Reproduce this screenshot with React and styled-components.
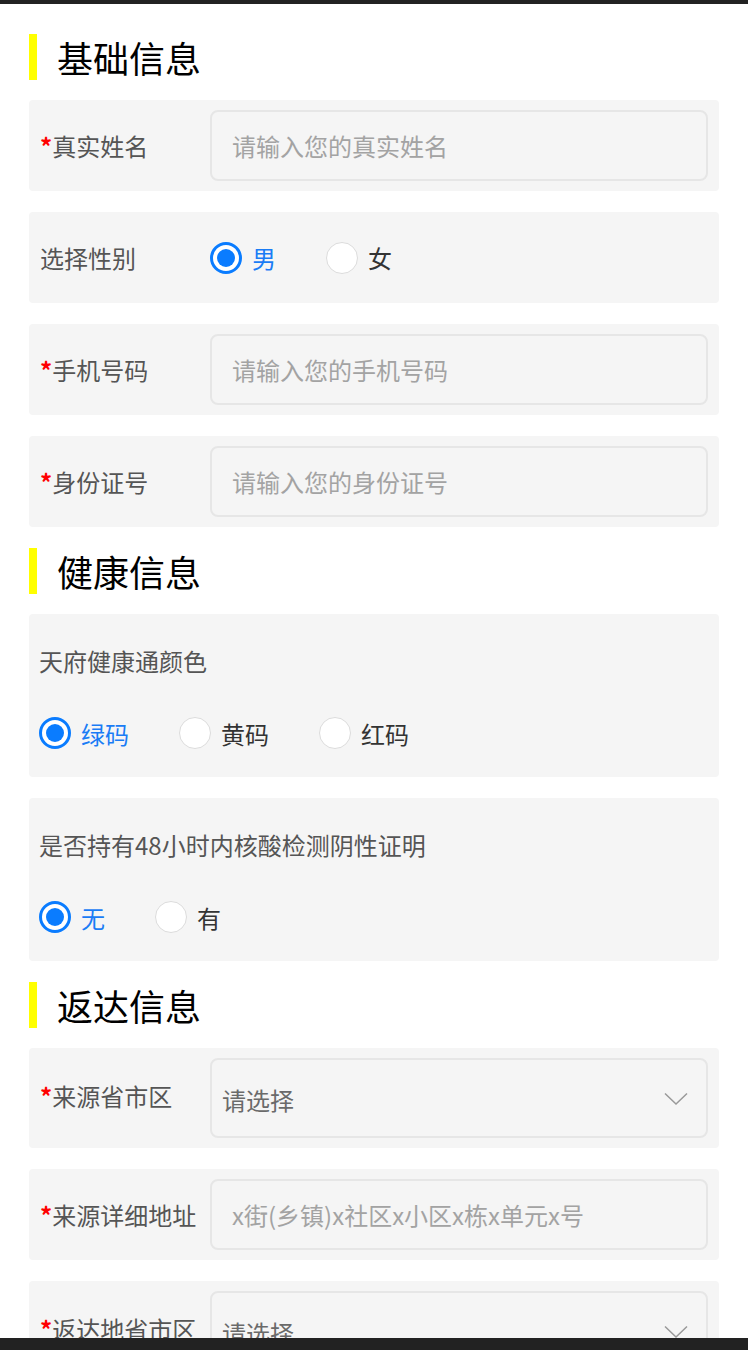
import React, { useState } from 'react'
import styled, { createGlobalStyle } from 'styled-components'

const GlobalStyle = createGlobalStyle`
  * { box-sizing: border-box; }
  body {
    margin: 0;
    background: #fff;
    font-family: "Noto Sans CJK SC", "Noto Sans", sans-serif;
  }
`
const TopBar = styled.div`
  height: 4px;
  background: #222;
`
const BottomBar = styled.div`
  position: fixed;
  left: 0;
  right: 0;
  bottom: 0;
  height: 12px;
  background: #222;
`
const Page = styled.div`
  padding: 30px 29px 40px;
  display: flex;
  flex-direction: column;
`
const SectionTitle = styled.h2`
  margin: 0 0 20px;
  height: 46px;
  display: flex;
  align-items: center;
  border-left: 8px solid #ffff00;
  padding-left: 20px;
  font-size: 36px;
  font-weight: 400;
  color: #000;
`
const Row = styled.div`
  display: flex;
  align-items: center;
  background: #f5f5f5;
  border-radius: 4px;
  padding: 10px 11px;
  min-height: ${p => p.$tall ? 100 : 91}px;
  margin-bottom: 21px;
`
const Block = styled.div`
  background: #f5f5f5;
  border-radius: 4px;
  padding: 10px 10px 8px 10px;
  margin-bottom: 21px;
`
const Question = styled.div`
  height: 72px;
  display: flex;
  align-items: center;
  font-size: 24px;
  color: #555;
`
const Label = styled.div`
  width: 170px;
  flex-shrink: 0;
  font-size: 24px;
  color: #555;
  white-space: nowrap;
  margin-top: ${p => p.$up ? -6 : 0}px;
`
const Star = styled.span`
  color: #f00;
  font-weight: 700;
`
const Input = styled.input`
  flex: 1;
  height: 71px;
  border: 2px solid #e6e6e6;
  border-radius: 8px;
  background: #f5f5f5;
  padding: 0 20px;
  font-size: 24px;
  font-family: inherit;
  color: #333;
  outline: none;
  &::placeholder { color: #a3a3a3; }
`
const Select = styled.div`
  flex: 1;
  height: 80px;
  border: 2px solid #e6e6e6;
  border-radius: 8px;
  display: flex;
  align-items: center;
  justify-content: space-between;
  padding: 2px 18px 0 10px;
  font-size: 24px;
  color: #6a6a6a;
`
const Radios = styled.div`
  display: flex;
  align-items: center;
  height: ${p => p.$inline ? 'auto' : '72px'};
  margin-top: ${p => p.$inline ? 0 : 1}px;
`
const RadioItem = styled.label`
  display: flex;
  align-items: center;
  width: ${p => p.$w}px;
  font-size: 24px;
  color: ${p => p.$on ? '#1a7cf5' : '#333'};
  cursor: pointer;
`
const Circle = styled.span`
  width: 32px;
  height: 32px;
  border-radius: 50%;
  margin-right: 10px;
  display: flex;
  align-items: center;
  justify-content: center;
  background: #fff;
  border: ${p => p.$on ? '3px solid #0a7cff' : '1px solid #dcdcdc'};
  &::after {
    content: '';
    display: ${p => p.$on ? 'block' : 'none'};
    width: 18px;
    height: 18px;
    border-radius: 50%;
    background: #0a7cff;
  }
`

function RadioGroup({ options, width, inline }) {
  const [value, setValue] = useState(0)
  return (
    <Radios $inline={inline}>
      {options.map((o, i) => (
        <RadioItem key={o} $w={width} $on={value === i} onClick={() => setValue(i)}>
          <Circle $on={value === i} />
          {o}
        </RadioItem>
      ))}
    </Radios>
  )
}

const Chevron = () => (
  <svg width="24" height="14" viewBox="0 0 24 14" fill="none">
    <path d="M1 1.5 L12 12 L23 1.5" stroke="#999" strokeWidth="1.5" />
  </svg>
)

export default function App() {
  return (
    <>
      <GlobalStyle />
      <TopBar />
      <Page>
        <SectionTitle>基础信息</SectionTitle>
        <Row>
          <Label><Star>*</Star>真实姓名</Label>
          <Input placeholder="请输入您的真实姓名" />
        </Row>
        <Row>
          <Label>选择性别</Label>
          <RadioGroup inline options={['男', '女']} width={116} />
        </Row>
        <Row>
          <Label><Star>*</Star>手机号码</Label>
          <Input placeholder="请输入您的手机号码" />
        </Row>
        <Row>
          <Label><Star>*</Star>身份证号</Label>
          <Input placeholder="请输入您的身份证号" />
        </Row>

        <SectionTitle>健康信息</SectionTitle>
        <Block>
          <Question>天府健康通颜色</Question>
          <RadioGroup options={['绿码', '黄码', '红码']} width={140} />
        </Block>
        <Block>
          <Question>是否持有48小时内核酸检测阴性证明</Question>
          <RadioGroup options={['无', '有']} width={116} />
        </Block>

        <SectionTitle>返达信息</SectionTitle>
        <Row $tall>
          <Label $up><Star>*</Star>来源省市区</Label>
          <Select>请选择<Chevron /></Select>
        </Row>
        <Row>
          <Label><Star>*</Star>来源详细地址</Label>
          <Input placeholder="x街(乡镇)x社区x小区x栋x单元x号" />
        </Row>
        <Row $tall>
          <Label $up><Star>*</Star>返达地省市区</Label>
          <Select>请选择<Chevron /></Select>
        </Row>
      </Page>
      <BottomBar />
    </>
  )
}
